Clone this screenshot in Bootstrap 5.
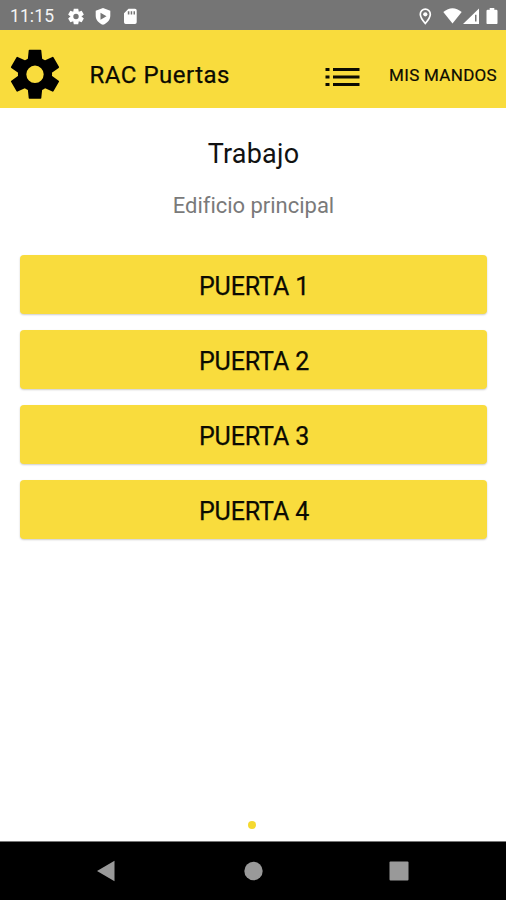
<!DOCTYPE html>
<html lang="es">
<head>
<meta charset="utf-8">
<meta name="viewport" content="width=device-width, initial-scale=1">
<title>RAC Puertas</title>
<link href="https://cdn.jsdelivr.net/npm/bootstrap@5.3.0/dist/css/bootstrap.min.css" rel="stylesheet">
<style>
body { font-family: Roboto, "Noto Sans", sans-serif; color: #111; }
svg { display: block; flex: none; }
.status { height: 30px; background: #757575; color: #fff; padding: 1px 8px 0 10px; }
.clock { font-size: 17.5px; line-height: 28px; letter-spacing: .1px; width: 58px; color: #f4f4f4; }
.appbar { height: 78px; background: #f9dc3d; padding: 0 9px 0 11px; color: #0c0b02; }
.brand { font-size: 24px; line-height: 30px; letter-spacing: .5px; margin-left: 30.500px; -webkit-text-stroke: .25px; }
.remote-link { font-size: 17px; line-height: 24px; letter-spacing: .3px; color: inherit; margin-left: 28.500px; -webkit-text-stroke: .2px; }
.place { font-size: 27px; line-height: 32px; letter-spacing: .2px; margin: 30px 0 0; padding-left: 1px; }
.building { font-size: 22px; line-height: 28px; letter-spacing: -.02px; color: #7a7a7a; margin: 22px 0 0; padding-left: 1px; }
.doors { padding: 35px 19px 0 20px; gap: 16px; }
.door { --bs-btn-bg: #f9dc3d; --bs-btn-color: #0c0b02; --bs-btn-hover-bg: #f2d429; height: 59px; border: 0; border-radius: 4px; font-size: 25px; letter-spacing: -.12px; line-height: 30px; padding: 4px 0 0 1px; -webkit-text-stroke: .25px; box-shadow: 0 1px 2px rgba(0,0,0,.2); }
.page-dot { width: 8px; height: 8px; background: #f5d92f; margin: 0 0 12px 248px; }
.navkeys { height: 59px; border-top: 1px solid #777; background: #000; padding: 0 97px 0 96px; }
</style>
</head>
<body>
<div class="vh-100 d-flex flex-column bg-white overflow-hidden">
  <div class="status d-flex align-items-center flex-shrink-0">
    <span class="clock text-nowrap">11:15</span>
    <svg width="72" height="20" viewBox="68 5 72 20" fill="#fff">
      <g transform="translate(76 15.5)">
        <g><path d="M-2.2-7.8h4.4l.6 3h-5.6zM-2.2 7.8h4.4l.6-3h-5.6z"/><path transform="rotate(60)" d="M-2.2-7.8h4.4l.6 3h-5.6zM-2.2 7.8h4.4l.6-3h-5.6z"/><path transform="rotate(120)" d="M-2.2-7.8h4.4l.6 3h-5.6zM-2.2 7.8h4.4l.6-3h-5.6z"/></g>
        <circle r="4.2" fill="none" stroke="#fff" stroke-width="3"/>
      </g>
      <path fill-rule="evenodd" d="M103 7l7.3 2.7v5c0 4.2-3 7.500-7.300 9.100-4.300-1.600-7.300-4.900-7.300-9.100v-5zM100.500 11.800v7l6-3.500z"/>
      <path fill-rule="evenodd" d="M128.500 7.800h6.500q1.700 0 1.700 1.700v11.800q0 1.700-1.700 1.700h-9.300q-1.700 0-1.700-1.700v-9zM127.800 10.200v3.300h1.600v-3.300zM130.700 10.200v3.300h1.500v-3.300zM133.500 10.200v3.300h1.500v-3.300z"/>
    </svg>
    <svg class="ms-auto" width="82" height="20" viewBox="416 5 82 20" fill="#fff">
      <path d="M425.300 8.200a5 5 0 0 1 5 5c0 3.400-5 9.300-5 9.300s-5-5.900-5-9.300a5 5 0 0 1 5-5z" fill="none" stroke="#fff" stroke-width="1.700"/>
      <circle cx="425.300" cy="13.300" r="2.100"/>
      <path d="M443.300 11q9.200-7.600 18.400 0l-9.200 11.600z"/>
      <path fill-rule="evenodd" d="M479 7.500V23h-16zM475 13.800v6.800h1.500v-6.800z"/>
      <path d="M489.700 7h4.600v1.700h2q1.200 0 1.200 1.200v12q0 1.200-1.200 1.200h-8.600q-1.200 0-1.200-1.200v-12q0-1.200 1.200-1.200h2z"/>
    </svg>
  </div>
  <header class="appbar d-flex align-items-center flex-shrink-0">
    <svg width="48" height="50" viewBox="-24 -25 48 50" overflow="visible" role="img" aria-label="Ajustes">
      <defs><path id="tooth" d="M-6.300-23.700Q-6.300-24.500-5.500-24.500h11Q6.300-24.500 6.300-23.700L7.300-14h-14.600z"/></defs>
      <g transform="translate(0 5.300)"><use href="#tooth"/><use href="#tooth" transform="rotate(60)"/><use href="#tooth" transform="rotate(120)"/><use href="#tooth" transform="rotate(180)"/><use href="#tooth" transform="rotate(240)"/><use href="#tooth" transform="rotate(300)"/><circle r="12.900" fill="none" stroke="#000" stroke-width="8.400"/></g>
    </svg>
    <span class="brand text-nowrap mt-2 pt-1">RAC Puertas</span>
    <svg class="ms-auto mt-3" width="36" height="22" viewBox="325 66 36 22">
      <path d="M325.500 69.500h4M333 69.500h26.500M325.500 77h4M333 77h26.500M325.500 84.500h4M333 84.500h26.500" stroke="#0c0b02" stroke-width="3.200"/>
    </svg>
    <a href="#" class="remote-link text-decoration-none text-nowrap mt-2 pt-1">MIS MANDOS</a>
  </header>
  <main class="d-flex flex-column flex-grow-1">
    <h1 class="place text-center fw-normal">Trabajo</h1>
    <p class="building text-center">Edificio principal</p>
    <div class="doors d-grid">
      <button class="btn door">PUERTA 1</button>
      <button class="btn door">PUERTA 2</button>
      <button class="btn door">PUERTA 3</button>
      <button class="btn door">PUERTA 4</button>
    </div>
    <div class="page-dot rounded-circle mt-auto"></div>
  </main>
  <nav class="navkeys d-flex align-items-center justify-content-between flex-shrink-0">
    <svg width="20" height="22" viewBox="0 0 20 22"><path d="M1 11L18.500.8v20.400z" fill="#999"/></svg>
    <svg width="20" height="20" viewBox="0 0 20 20"><circle cx="10.500" cy="10" r="9.200" fill="#999"/></svg>
    <svg width="20" height="20" viewBox="0 0 20 20"><rect x=".5" y=".5" width="19" height="19" rx="1" fill="#999"/></svg>
  </nav>
</div>
<script src="https://cdn.jsdelivr.net/npm/bootstrap@5.3.0/dist/js/bootstrap.bundle.min.js"></script>
</body>
</html>
